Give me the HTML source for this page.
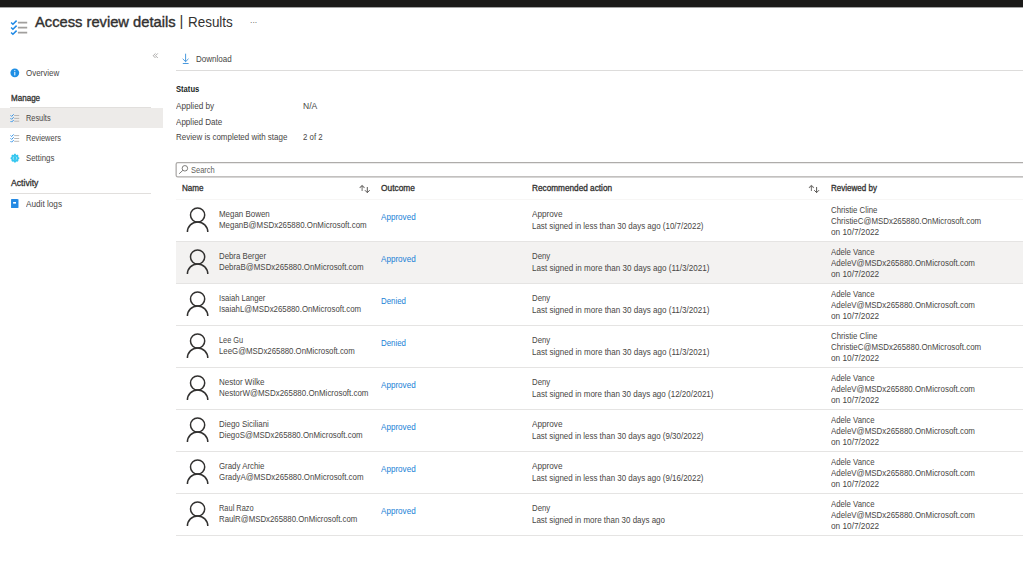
<!DOCTYPE html>
<html><head><meta charset="utf-8"><title>Access review details | Results</title>
<style>
*{box-sizing:border-box;margin:0;padding:0}
html,body{width:1023px;height:572px;overflow:hidden;background:#fff}
body{font-family:"Liberation Sans",sans-serif;position:relative}
.a{position:absolute}
.t{position:absolute;white-space:nowrap;line-height:12px;transform-origin:0 0}
</style></head><body>
<div class="a" style="left:0px;top:0px;width:1023px;height:7px;background:#1b1a19;"></div>
<div class="a" style="left:0px;top:7px;width:1023px;height:1px;background:#a4a4a4;"></div>
<div class="a" style="left:0px;top:108px;width:163px;height:20px;background:#edebe9;"></div>
<div class="a" style="left:10px;top:107px;width:141px;height:1px;background:#e1dfdd;"></div>
<div class="a" style="left:10px;top:193px;width:141px;height:1px;background:#e1dfdd;"></div>
<div class="a" style="left:176px;top:70px;width:847px;height:1px;background:#dddcdb;"></div>
<svg class="a" style="left:170px;top:158px" width="853" height="24" viewBox="170 158 853 24"><rect x="176.15" y="162.6" width="900" height="14.3" rx="1.6" fill="#fff" stroke="#aeacaa" stroke-width="1.3"/></svg>
<div class="a" style="left:176px;top:199px;width:847px;height:1px;background:#f7f6f5;"></div>
<div class="a" style="left:176px;top:241px;width:847px;height:1px;background:#e5e4e3;"></div>
<svg class="a" style="left:184px;top:206px" width="26" height="28" viewBox="0 0 26 28" fill="none" stroke="#323130" stroke-width="1.5"><circle cx="13.6" cy="9.0" r="7.1"/><path d="M3.4 26.1 A10.2 10.2 0 0 1 23.8 26.1"/></svg>
<div class="a" style="left:176px;top:242px;width:847px;height:41px;background:#f3f2f1;"></div>
<div class="a" style="left:176px;top:283px;width:847px;height:1px;background:#e5e4e3;"></div>
<svg class="a" style="left:184px;top:248px" width="26" height="28" viewBox="0 0 26 28" fill="none" stroke="#323130" stroke-width="1.5"><circle cx="13.6" cy="9.0" r="7.1"/><path d="M3.4 26.1 A10.2 10.2 0 0 1 23.8 26.1"/></svg>
<div class="a" style="left:176px;top:325px;width:847px;height:1px;background:#e5e4e3;"></div>
<svg class="a" style="left:184px;top:290px" width="26" height="28" viewBox="0 0 26 28" fill="none" stroke="#323130" stroke-width="1.5"><circle cx="13.6" cy="9.0" r="7.1"/><path d="M3.4 26.1 A10.2 10.2 0 0 1 23.8 26.1"/></svg>
<div class="a" style="left:176px;top:367px;width:847px;height:1px;background:#e5e4e3;"></div>
<svg class="a" style="left:184px;top:332px" width="26" height="28" viewBox="0 0 26 28" fill="none" stroke="#323130" stroke-width="1.5"><circle cx="13.6" cy="9.0" r="7.1"/><path d="M3.4 26.1 A10.2 10.2 0 0 1 23.8 26.1"/></svg>
<div class="a" style="left:176px;top:409px;width:847px;height:1px;background:#e5e4e3;"></div>
<svg class="a" style="left:184px;top:374px" width="26" height="28" viewBox="0 0 26 28" fill="none" stroke="#323130" stroke-width="1.5"><circle cx="13.6" cy="9.0" r="7.1"/><path d="M3.4 26.1 A10.2 10.2 0 0 1 23.8 26.1"/></svg>
<div class="a" style="left:176px;top:451px;width:847px;height:1px;background:#e5e4e3;"></div>
<svg class="a" style="left:184px;top:416px" width="26" height="28" viewBox="0 0 26 28" fill="none" stroke="#323130" stroke-width="1.5"><circle cx="13.6" cy="9.0" r="7.1"/><path d="M3.4 26.1 A10.2 10.2 0 0 1 23.8 26.1"/></svg>
<div class="a" style="left:176px;top:493px;width:847px;height:1px;background:#e5e4e3;"></div>
<svg class="a" style="left:184px;top:458px" width="26" height="28" viewBox="0 0 26 28" fill="none" stroke="#323130" stroke-width="1.5"><circle cx="13.6" cy="9.0" r="7.1"/><path d="M3.4 26.1 A10.2 10.2 0 0 1 23.8 26.1"/></svg>
<div class="a" style="left:176px;top:535px;width:847px;height:1px;background:#e5e4e3;"></div>
<svg class="a" style="left:184px;top:500px" width="26" height="28" viewBox="0 0 26 28" fill="none" stroke="#323130" stroke-width="1.5"><circle cx="13.6" cy="9.0" r="7.1"/><path d="M3.4 26.1 A10.2 10.2 0 0 1 23.8 26.1"/></svg>
<svg class="a" style="left:0;top:0" width="1023" height="572" viewBox="0 0 1023 572" fill="none">
<!-- title checklist icon -->
<g stroke="#1e88e5" stroke-width="1.5" stroke-linejoin="miter">
<path d="M11.1 22.5 L12.9 24.3 L16.6 20.6"/><path d="M11.1 27.5 L12.9 29.3 L16.6 25.6"/><path d="M11.1 32.5 L12.9 34.3 L16.6 30.6"/>
</g>
<g stroke="#a19f9d" stroke-width="1.7"><path d="M17.9 22.7H27.2M17.9 27.7H27.2M17.9 32.7H27.2"/></g>
<!-- collapse chevrons -->
<g stroke="#8a8886" stroke-width="0.7"><path d="M155.5 53.4 L153.2 55.7 L155.5 58.0"/><path d="M157.8 53.4 L155.5 55.7 L157.8 58.0"/></g>
<!-- info icon -->
<circle cx="14.8" cy="72.85" r="4.4" fill="#1f8fe5"/>
<rect x="14.3" y="70.1" width="1" height="1.1" fill="#fff"/><rect x="14.3" y="72" width="1" height="3.4" fill="#fff"/>
<!-- small checklist icons -->
<g id="cl">
<g stroke="#1e88e5" stroke-width="0.9"><path d="M10.5 115.3 L11.6 116.4 L13.7 114.3"/><path d="M10.5 118.2 L11.6 119.3 L13.7 117.2"/><path d="M10.5 121.0 L11.6 122.1 L13.7 120.0"/></g>
<g stroke="#b3b0ad" stroke-width="0.9"><path d="M14.2 115.5H19.2M14.2 118.4H19.2M14.2 121.2H19.2"/></g>
</g>
<g transform="translate(0,20.1)">
<g stroke="#1e88e5" stroke-width="0.9"><path d="M10.5 115.3 L11.6 116.4 L13.7 114.3"/><path d="M10.5 118.2 L11.6 119.3 L13.7 117.2"/><path d="M10.5 121.0 L11.6 122.1 L13.7 120.0"/></g>
<g stroke="#b3b0ad" stroke-width="0.9"><path d="M14.2 115.5H19.2M14.2 118.4H19.2M14.2 121.2H19.2"/></g>
</g>
<!-- gear -->
<path d="M13.91 154.64 L14.17 153.87 L15.69 153.87 L15.95 154.64 L16.72 154.96 L17.45 154.60 L18.53 155.68 L18.17 156.41 L18.49 157.18 L19.26 157.44 L19.26 158.96 L18.49 159.22 L18.17 159.99 L18.53 160.72 L17.45 161.80 L16.72 161.44 L15.95 161.76 L15.69 162.53 L14.17 162.53 L13.91 161.76 L13.14 161.44 L12.41 161.80 L11.33 160.72 L11.69 159.99 L11.37 159.22 L10.60 158.96 L10.60 157.44 L11.37 157.18 L11.69 156.41 L11.33 155.68 L12.41 154.60 L13.14 154.96Z" fill="#34c6ef"/>
<path d="M14.1 156.6 A1.8 1.8 0 0 0 14.1 159.8 M15.76 156.6 A1.8 1.8 0 0 1 15.76 159.8" stroke="#b5eafa" stroke-width="0.9" fill="none"/>
<!-- audit logs -->
<rect x="11.05" y="199.1" width="7" height="9" rx="0.6" fill="#2389e3"/>
<rect x="18" y="199.3" width="0.7" height="8.5" fill="#6bb1ee"/>
<rect x="13.1" y="202" width="2.9" height="1.6" fill="#fff"/>
<!-- download -->
<g stroke="#2b88d8" stroke-width="0.85"><path d="M185.6 53.7V61.7M182.7 58.8L185.6 61.7L188.5 58.8M182.8 63.5H188.6"/></g>
<!-- search icon -->
<g stroke="#605e5c" stroke-width="0.8"><circle cx="184.9" cy="168.3" r="2.75"/><path d="M182.9 170.3L179.1 173.8"/></g>
<!-- sort arrows -->
<g id="sa">
<g stroke="#7a7876" stroke-width="1.05"><path d="M362.1 191.1V185.5M359.7 187.9L362.1 185.5L364.5 187.9"/></g>
<g stroke="#484644" stroke-width="0.9"><path d="M367.3 187V192.6M364.9 190.2L367.3 192.6L369.7 190.2"/></g>
</g>
<g transform="translate(449.3,0)">
<g stroke="#7a7876" stroke-width="1.05"><path d="M362.1 191.1V185.5M359.7 187.9L362.1 185.5L364.5 187.9"/></g>
<g stroke="#484644" stroke-width="0.9"><path d="M367.3 187V192.6M364.9 190.2L367.3 192.6L369.7 190.2"/></g>
</g>
</svg>

<div class="t" style="left:34.5px;top:16.15px;font-size:14.0px;color:#323130;transform:scaleX(1.0506);-webkit-text-stroke:0.38px #323130">Access review details</div>
<div class="t" style="left:179.5px;top:15.27px;font-size:14.8px;color:#323130;transform:scaleX(1.0000)">|</div>
<div class="t" style="left:188.4px;top:16.15px;font-size:14.0px;color:#323130;transform:scaleX(0.9596)">Results</div>
<div class="t" style="left:250.0px;top:16.08px;font-size:9px;color:#605e5c;transform:scaleX(0.8000)">···</div>
<div class="t" style="left:25.8px;top:66.92px;font-size:8.6px;color:#484644;transform:scaleX(0.9266)">Overview</div>
<div class="t" style="left:10.8px;top:91.82px;font-size:8.6px;color:#323130;transform:scaleX(0.9368);-webkit-text-stroke:0.30px #323130">Manage</div>
<div class="t" style="left:26.1px;top:112.42px;font-size:8.6px;color:#484644;transform:scaleX(0.8585)">Results</div>
<div class="t" style="left:26.1px;top:132.22px;font-size:8.6px;color:#484644;transform:scaleX(0.8698)">Reviewers</div>
<div class="t" style="left:26.1px;top:152.22px;font-size:8.6px;color:#484644;transform:scaleX(0.9143)">Settings</div>
<div class="t" style="left:10.5px;top:177.02px;font-size:8.6px;color:#323130;transform:scaleX(1.0067);-webkit-text-stroke:0.30px #323130">Activity</div>
<div class="t" style="left:26.1px;top:197.82px;font-size:8.6px;color:#484644;transform:scaleX(0.9536)">Audit logs</div>
<div class="t" style="left:195.8px;top:52.92px;font-size:8.6px;color:#484644;transform:scaleX(0.9341)">Download</div>
<div class="t" style="left:175.8px;top:83.02px;font-size:8.6px;color:#201f1e;transform:scaleX(0.8871);font-weight:700">Status</div>
<div class="t" style="left:175.8px;top:100.12px;font-size:8.6px;color:#484644;transform:scaleX(0.9517)">Applied by</div>
<div class="t" style="left:302.9px;top:100.12px;font-size:8.6px;color:#484644;transform:scaleX(0.9911)">N/A</div>
<div class="t" style="left:175.8px;top:115.62px;font-size:8.6px;color:#484644;transform:scaleX(0.9387)">Applied Date</div>
<div class="t" style="left:175.8px;top:131.32px;font-size:8.6px;color:#484644;transform:scaleX(0.9292)">Review is completed with stage</div>
<div class="t" style="left:302.9px;top:131.32px;font-size:8.6px;color:#484644;transform:scaleX(0.9110)">2 of 2</div>
<div class="t" style="left:191.1px;top:163.82px;font-size:8.6px;color:#605e5c;transform:scaleX(0.8739)">Search</div>
<div class="t" style="left:182.1px;top:182.02px;font-size:8.6px;color:#323130;transform:scaleX(0.9417);-webkit-text-stroke:0.30px #323130">Name</div>
<div class="t" style="left:381.2px;top:182.02px;font-size:8.6px;color:#323130;transform:scaleX(0.9720);-webkit-text-stroke:0.30px #323130">Outcome</div>
<div class="t" style="left:531.8px;top:182.02px;font-size:8.6px;color:#323130;transform:scaleX(0.9580);-webkit-text-stroke:0.30px #323130">Recommended action</div>
<div class="t" style="left:830.9px;top:182.02px;font-size:8.6px;color:#323130;transform:scaleX(0.9329);-webkit-text-stroke:0.30px #323130">Reviewed by</div>
<div class="t" style="left:219.4px;top:208.22px;font-size:8.6px;color:#484644;transform:scaleX(0.9244)">Megan Bowen</div>
<div class="t" style="left:219.4px;top:219.42px;font-size:8.6px;color:#484644;transform:scaleX(0.9223)">MeganB@MSDx265880.OnMicrosoft.com</div>
<div class="t" style="left:380.8px;top:211.22px;font-size:8.6px;color:#1a7fd6;transform:scaleX(0.9430)">Approved</div>
<div class="t" style="left:531.8px;top:208.22px;font-size:8.6px;color:#484644;transform:scaleX(0.9527)">Approve</div>
<div class="t" style="left:531.8px;top:219.62px;font-size:8.6px;color:#484644;transform:scaleX(0.9252)">Last signed in less than 30 days ago (10/7/2022)</div>
<div class="t" style="left:830.9px;top:204.02px;font-size:8.6px;color:#484644;transform:scaleX(0.9079)">Christie Cline</div>
<div class="t" style="left:830.9px;top:215.42px;font-size:8.6px;color:#484644;transform:scaleX(0.9182)">ChristieC@MSDx265880.OnMicrosoft.com</div>
<div class="t" style="left:830.9px;top:226.42px;font-size:8.6px;color:#484644;transform:scaleX(0.9604)">on 10/7/2022</div>
<div class="t" style="left:219.4px;top:250.22px;font-size:8.6px;color:#484644;transform:scaleX(0.9110)">Debra Berger</div>
<div class="t" style="left:219.4px;top:261.42px;font-size:8.6px;color:#484644;transform:scaleX(0.9188)">DebraB@MSDx265880.OnMicrosoft.com</div>
<div class="t" style="left:380.8px;top:253.22px;font-size:8.6px;color:#1a7fd6;transform:scaleX(0.9430)">Approved</div>
<div class="t" style="left:531.8px;top:250.22px;font-size:8.6px;color:#484644;transform:scaleX(0.9072)">Deny</div>
<div class="t" style="left:531.8px;top:261.62px;font-size:8.6px;color:#484644;transform:scaleX(0.9385)">Last signed in more than 30 days ago (11/3/2021)</div>
<div class="t" style="left:830.9px;top:246.02px;font-size:8.6px;color:#484644;transform:scaleX(0.9042)">Adele Vance</div>
<div class="t" style="left:830.9px;top:257.42px;font-size:8.6px;color:#484644;transform:scaleX(0.9234)">AdeleV@MSDx265880.OnMicrosoft.com</div>
<div class="t" style="left:830.9px;top:268.42px;font-size:8.6px;color:#484644;transform:scaleX(0.9604)">on 10/7/2022</div>
<div class="t" style="left:219.4px;top:292.22px;font-size:8.6px;color:#484644;transform:scaleX(0.8907)">Isaiah Langer</div>
<div class="t" style="left:219.4px;top:303.42px;font-size:8.6px;color:#484644;transform:scaleX(0.9118)">IsaiahL@MSDx265880.OnMicrosoft.com</div>
<div class="t" style="left:380.8px;top:295.22px;font-size:8.6px;color:#1a7fd6;transform:scaleX(0.9180)">Denied</div>
<div class="t" style="left:531.8px;top:292.22px;font-size:8.6px;color:#484644;transform:scaleX(0.9072)">Deny</div>
<div class="t" style="left:531.8px;top:303.62px;font-size:8.6px;color:#484644;transform:scaleX(0.9385)">Last signed in more than 30 days ago (11/3/2021)</div>
<div class="t" style="left:830.9px;top:288.02px;font-size:8.6px;color:#484644;transform:scaleX(0.9042)">Adele Vance</div>
<div class="t" style="left:830.9px;top:299.42px;font-size:8.6px;color:#484644;transform:scaleX(0.9234)">AdeleV@MSDx265880.OnMicrosoft.com</div>
<div class="t" style="left:830.9px;top:310.42px;font-size:8.6px;color:#484644;transform:scaleX(0.9604)">on 10/7/2022</div>
<div class="t" style="left:219.4px;top:334.22px;font-size:8.6px;color:#484644;transform:scaleX(0.8545)">Lee Gu</div>
<div class="t" style="left:219.4px;top:345.42px;font-size:8.6px;color:#484644;transform:scaleX(0.9098)">LeeG@MSDx265880.OnMicrosoft.com</div>
<div class="t" style="left:380.8px;top:337.22px;font-size:8.6px;color:#1a7fd6;transform:scaleX(0.9180)">Denied</div>
<div class="t" style="left:531.8px;top:334.22px;font-size:8.6px;color:#484644;transform:scaleX(0.9072)">Deny</div>
<div class="t" style="left:531.8px;top:345.62px;font-size:8.6px;color:#484644;transform:scaleX(0.9385)">Last signed in more than 30 days ago (11/3/2021)</div>
<div class="t" style="left:830.9px;top:330.02px;font-size:8.6px;color:#484644;transform:scaleX(0.9079)">Christie Cline</div>
<div class="t" style="left:830.9px;top:341.42px;font-size:8.6px;color:#484644;transform:scaleX(0.9182)">ChristieC@MSDx265880.OnMicrosoft.com</div>
<div class="t" style="left:830.9px;top:352.42px;font-size:8.6px;color:#484644;transform:scaleX(0.9604)">on 10/7/2022</div>
<div class="t" style="left:219.4px;top:376.22px;font-size:8.6px;color:#484644;transform:scaleX(0.9339)">Nestor Wilke</div>
<div class="t" style="left:219.4px;top:387.42px;font-size:8.6px;color:#484644;transform:scaleX(0.9253)">NestorW@MSDx265880.OnMicrosoft.com</div>
<div class="t" style="left:380.8px;top:379.22px;font-size:8.6px;color:#1a7fd6;transform:scaleX(0.9430)">Approved</div>
<div class="t" style="left:531.8px;top:376.22px;font-size:8.6px;color:#484644;transform:scaleX(0.9072)">Deny</div>
<div class="t" style="left:531.8px;top:387.62px;font-size:8.6px;color:#484644;transform:scaleX(0.9334)">Last signed in more than 30 days ago (12/20/2021)</div>
<div class="t" style="left:830.9px;top:372.02px;font-size:8.6px;color:#484644;transform:scaleX(0.9042)">Adele Vance</div>
<div class="t" style="left:830.9px;top:383.42px;font-size:8.6px;color:#484644;transform:scaleX(0.9234)">AdeleV@MSDx265880.OnMicrosoft.com</div>
<div class="t" style="left:830.9px;top:394.42px;font-size:8.6px;color:#484644;transform:scaleX(0.9604)">on 10/7/2022</div>
<div class="t" style="left:219.4px;top:418.22px;font-size:8.6px;color:#484644;transform:scaleX(0.9243)">Diego Siciliani</div>
<div class="t" style="left:219.4px;top:429.42px;font-size:8.6px;color:#484644;transform:scaleX(0.9187)">DiegoS@MSDx265880.OnMicrosoft.com</div>
<div class="t" style="left:380.8px;top:421.22px;font-size:8.6px;color:#1a7fd6;transform:scaleX(0.9430)">Approved</div>
<div class="t" style="left:531.8px;top:418.22px;font-size:8.6px;color:#484644;transform:scaleX(0.9527)">Approve</div>
<div class="t" style="left:531.8px;top:429.62px;font-size:8.6px;color:#484644;transform:scaleX(0.9252)">Last signed in less than 30 days ago (9/30/2022)</div>
<div class="t" style="left:830.9px;top:414.02px;font-size:8.6px;color:#484644;transform:scaleX(0.9042)">Adele Vance</div>
<div class="t" style="left:830.9px;top:425.42px;font-size:8.6px;color:#484644;transform:scaleX(0.9234)">AdeleV@MSDx265880.OnMicrosoft.com</div>
<div class="t" style="left:830.9px;top:436.42px;font-size:8.6px;color:#484644;transform:scaleX(0.9604)">on 10/7/2022</div>
<div class="t" style="left:219.4px;top:460.22px;font-size:8.6px;color:#484644;transform:scaleX(0.9157)">Grady Archie</div>
<div class="t" style="left:219.4px;top:471.42px;font-size:8.6px;color:#484644;transform:scaleX(0.9188)">GradyA@MSDx265880.OnMicrosoft.com</div>
<div class="t" style="left:380.8px;top:463.22px;font-size:8.6px;color:#1a7fd6;transform:scaleX(0.9430)">Approved</div>
<div class="t" style="left:531.8px;top:460.22px;font-size:8.6px;color:#484644;transform:scaleX(0.9527)">Approve</div>
<div class="t" style="left:531.8px;top:471.62px;font-size:8.6px;color:#484644;transform:scaleX(0.9252)">Last signed in less than 30 days ago (9/16/2022)</div>
<div class="t" style="left:830.9px;top:456.02px;font-size:8.6px;color:#484644;transform:scaleX(0.9042)">Adele Vance</div>
<div class="t" style="left:830.9px;top:467.42px;font-size:8.6px;color:#484644;transform:scaleX(0.9234)">AdeleV@MSDx265880.OnMicrosoft.com</div>
<div class="t" style="left:830.9px;top:478.42px;font-size:8.6px;color:#484644;transform:scaleX(0.9604)">on 10/7/2022</div>
<div class="t" style="left:219.4px;top:502.22px;font-size:8.6px;color:#484644;transform:scaleX(0.8648)">Raul Razo</div>
<div class="t" style="left:219.4px;top:513.42px;font-size:8.6px;color:#484644;transform:scaleX(0.9098)">RaulR@MSDx265880.OnMicrosoft.com</div>
<div class="t" style="left:380.8px;top:505.22px;font-size:8.6px;color:#1a7fd6;transform:scaleX(0.9430)">Approved</div>
<div class="t" style="left:531.8px;top:502.22px;font-size:8.6px;color:#484644;transform:scaleX(0.9072)">Deny</div>
<div class="t" style="left:531.8px;top:513.62px;font-size:8.6px;color:#484644;transform:scaleX(0.9279)">Last signed in more than 30 days ago</div>
<div class="t" style="left:830.9px;top:498.02px;font-size:8.6px;color:#484644;transform:scaleX(0.9042)">Adele Vance</div>
<div class="t" style="left:830.9px;top:509.42px;font-size:8.6px;color:#484644;transform:scaleX(0.9234)">AdeleV@MSDx265880.OnMicrosoft.com</div>
<div class="t" style="left:830.9px;top:520.42px;font-size:8.6px;color:#484644;transform:scaleX(0.9604)">on 10/7/2022</div>
</body></html>
